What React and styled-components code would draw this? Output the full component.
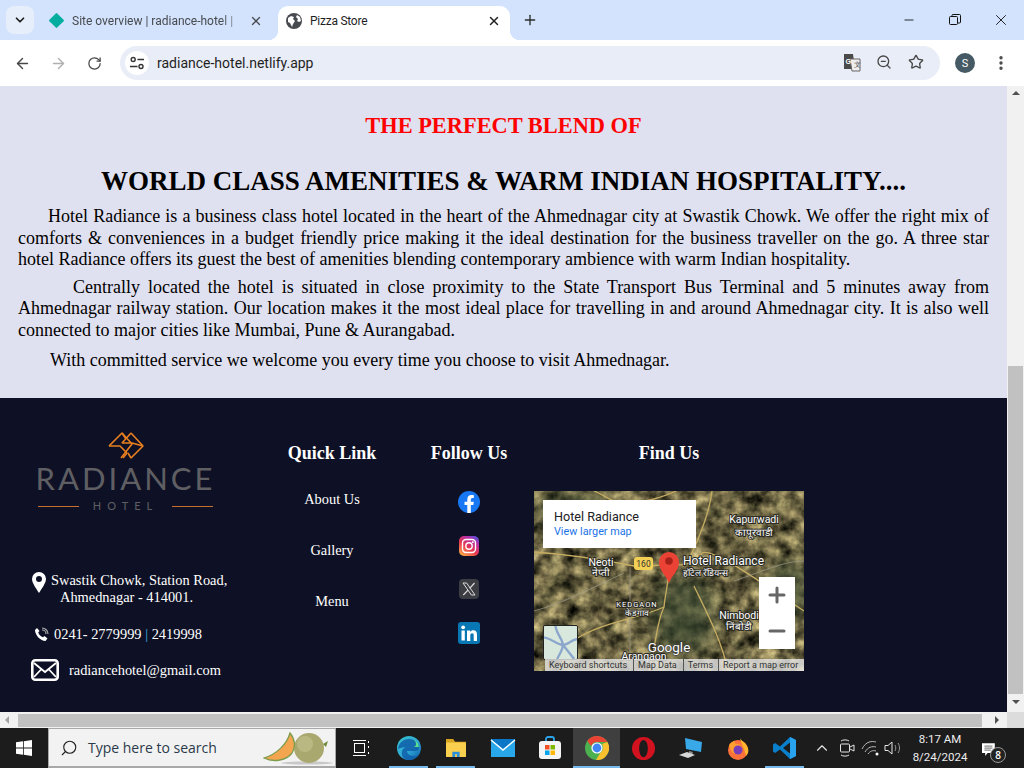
import React from 'react'
import styled, { createGlobalStyle } from 'styled-components'
import { ArrowLeft, ArrowRight, RotateCw, ChevronDown, X, Plus, Star, Search, ZoomOut, EllipsisVertical, Minus, ChevronUp } from 'lucide-react'

const Global = createGlobalStyle`
  html, body { margin: 0; padding: 0; height: 100%; overflow: hidden; background: #fff; }
  #root { height: 100%; }
  * { box-sizing: border-box; }
`

const Screen = styled.div`
  width: 1024px;
  height: 768px;
  display: flex;
  flex-direction: column;
  overflow: hidden;
  font-family: "Liberation Serif", serif;
`

/* browser chrome */
const TabStrip = styled.div`
  height: 40px;
  flex: none;
  background: #d3e3fd;
  display: flex;
  align-items: flex-end;
  padding-left: 6px;
  font-family: Roboto, "Liberation Sans", sans-serif;
  font-size: 12px;
  color: #44474a;
`
const TabList = styled.div`
  width: 28px;
  height: 28px;
  margin-bottom: 6px;
  border-radius: 8px;
  background: #e6eefb;
  color: #1f1f1f;
  display: flex;
  align-items: center;
  justify-content: center;
`
const Tab = styled.div`
  position: relative;
  height: 34px;
  display: flex;
  align-items: center;
  width: ${p => p.$w}px;
  margin-left: ${p => p.$ml || 0}px;
  padding: 0 ${p => p.$pr}px 5px ${p => p.$pl}px;
  border-radius: 10px 10px 0 0;
  background: ${p => (p.$active ? '#fff' : 'transparent')};
  color: ${p => (p.$active ? '#1f1f1f' : '#474a4e')};
  &::before, &::after {
    content: '';
    display: ${p => (p.$active ? 'block' : 'none')};
    position: absolute;
    bottom: 0;
    width: 10px;
    height: 10px;
  }
  &::before { left: -10px; background: radial-gradient(circle at 0 0, transparent 10px, #fff 10.5px); }
  &::after { right: -10px; background: radial-gradient(circle at 100% 0, transparent 10px, #fff 10.5px); }
`
const TabTitle = styled.span`
  flex: 1;
  margin-left: ${p => p.$gap}px;
  white-space: nowrap;
  ${p => (p.$fade
    ? 'mask-image: linear-gradient(90deg, #000 84%, transparent 100%);'
    : 'letter-spacing: -0.25px;')}
`
const Diamond = styled.span`
  width: 11px;
  height: 11px;
  margin: 0 1px;
  background: #00ad9f;
  border-radius: 1px;
  transform: rotate(45deg);
  flex: none;
`
const NewTab = styled.div`
  width: 16px;
  margin: 0 0 12px 12px;
  color: #2c2c2c;
  display: flex;
`
const WindowControls = styled.div`
  margin-left: auto;
  display: flex;
  align-self: flex-start;
  margin-top: 12px;
`
const WindowBtn = styled.div`
  width: 46px;
  height: 16px;
  display: flex;
  align-items: center;
  justify-content: center;
  color: #111;
`
const Toolbar = styled.div`
  height: 46px;
  flex: none;
  background: #fff;
  border-radius: 8px 8px 0 0;
  display: flex;
  align-items: center;
  padding: 0 0 0 4px;
  color: #474747;
`
const NavBtn = styled.div`
  width: 36px;
  display: flex;
  justify-content: center;
  color: ${p => (p.$off ? '#b0b0b0' : '#474747')};
`
const Omnibox = styled.div`
  width: 820px;
  height: 34px;
  margin-left: 8px;
  border-radius: 17px;
  background: #e9edf7;
  display: flex;
  align-items: center;
  padding: 0 8px 0 5px;
  font-family: Roboto, "Liberation Sans", sans-serif;
  font-size: 14px;
  color: #1f1f1f;
`
const SiteChip = styled.div`
  width: 24px;
  height: 24px;
  margin-right: 8px;
  border-radius: 50%;
  background: #fff;
  display: flex;
  align-items: center;
  justify-content: center;
`
const OmniIcons = styled.div`
  margin-left: auto;
  display: flex;
`
const OmniIcon = styled.div`
  width: 32px;
  display: flex;
  justify-content: center;
  color: #474747;
`
const Avatar = styled.div`
  width: 20px;
  height: 20px;
  margin-left: 15px;
  border-radius: 50%;
  background: #455a64;
  color: #fff;
  font-family: Roboto, sans-serif;
  font-size: 11px;
  display: flex;
  align-items: center;
  justify-content: center;
`
const MenuBtn = styled.div`
  margin-left: 16px;
  width: 20px;
  display: flex;
  justify-content: center;
  color: #474747;
`

/* page and scrollbars */
const Viewport = styled.div`
  height: 626px;
  flex: none;
  display: flex;
`
const Page = styled.div`
  width: 1007px;
  display: flex;
  flex-direction: column;
`
const VScroll = styled.div`
  width: 17px;
  background: #f1f1f1;
  display: flex;
  flex-direction: column;
  align-items: center;
`
const VThumb = styled.div`
  width: 15px;
  height: 328px;
  margin-top: 271px;
  background: #c1c1c1;
`
const ArrowUp = styled.div`
  margin-top: 5px;
  width: 0;
  height: 0;
  border: 4px solid transparent;
  border-top: 0;
  border-bottom: 4px solid #505050;
`
const ArrowDown = styled.div`
  margin-top: 6px;
  width: 0;
  height: 0;
  border: 4px solid transparent;
  border-bottom: 0;
  border-top: 4px solid #505050;
`
const HScroll = styled.div`
  height: 16px;
  flex: none;
  background: #f1f1f1;
  display: flex;
  align-items: center;
`
const HArrowLeft = styled.div`
  margin: 0 5px;
  width: 0;
  height: 0;
  border: 4px solid transparent;
  border-left: 0;
  border-right: 4px solid #a3a3a3;
`
const HArrowRight = styled.div`
  margin: 0 0 0 13px;
  width: 0;
  height: 0;
  border: 4px solid transparent;
  border-right: 0;
  border-left: 4px solid #505050;
`
const HThumb = styled.div`
  width: 964px;
  height: 13px;
  margin-left: 4px;
  background: #c1c1c1;
`
const ScrollCorner = styled.div`
  margin-left: auto;
  width: 17px;
  height: 16px;
  background: #dcdcdc;
`

/* page content */
const Intro = styled.section`
  height: 312px;
  flex: none;
  background: #e0e1f0;
  padding: 27px 18px 0;
  color: #000;
`
const Blend = styled.h2`
  margin: 0;
  text-align: center;
  font-size: 22.4px;
  line-height: 25px;
  color: #f00;
`
const Amenities = styled.h1`
  margin: 27px 0 0;
  text-align: center;
  font-size: 27px;
  line-height: 32px;
  color: #000;
`
const Para = styled.p`
  margin: ${p => p.$mt}px 0 0;
  font-size: 18px;
  line-height: 21.5px;
  text-align: justify;
  text-indent: ${p => p.$indent}px;
`
const Footer = styled.footer`
  flex: 1;
  background: #0e1125;
  color: #fff;
  display: grid;
  grid-template-columns: 260px 144px 130px 270px;
  padding-top: 34px;
`
const BrandCol = styled.div`
  display: flex;
  flex-direction: column;
  font-size: 14.4px;
`
const Logo = styled.div`
  width: 175px;
  margin-left: 38px;
  display: flex;
  flex-direction: column;
  align-items: center;
`
const LogoWord = styled.div`
  margin-top: 2px;
  font-family: Lato, sans-serif;
  font-weight: 400;
  font-size: 31px;
  line-height: 32px;
  letter-spacing: 3px;
  color: #5f5f63;
  white-space: nowrap;
`
const LogoSub = styled.div`
  width: 100%;
  margin-top: 6px;
  display: flex;
  align-items: center;
  justify-content: space-between;
  font-family: Lato, sans-serif;
  font-size: 11px;
  line-height: 12px;
  letter-spacing: 6px;
  color: #5f5f63;
  &::before, &::after {
    content: '';
    width: 41px;
    height: 1px;
    background: #c96f2e;
  }
`
const ContactRow = styled.div`
  display: flex;
  align-items: ${p => p.$align || 'center'};
  margin: ${p => p.$mt}px 0 0 ${p => p.$ml}px;
  gap: ${p => p.$gap}px;
  line-height: 17px;
  white-space: nowrap;
`
const AddressLine2 = styled.div`
  padding-left: 9px;
`
const Divider = styled.span`
  color: #3fb0e0;
`
const Col = styled.div`
  display: flex;
  flex-direction: column;
  align-items: center;
  padding-top: 11px;
`
const ColTitle = styled.h3`
  margin: 0;
  font-size: 18px;
  line-height: 21px;
  font-weight: bold;
`
const LinkList = styled.div`
  margin-top: 10px;
  display: flex;
  flex-direction: column;
  font-size: 14.4px;
`
const LinkItem = styled.div`
  height: 51px;
  display: flex;
  align-items: center;
  justify-content: center;
`
const SocialList = styled.div`
  margin-top: 27px;
  display: flex;
  flex-direction: column;
  gap: 21.5px;
`
const SocialIcon = styled.svg`
  display: block;
  width: 22px;
  height: 22px;
`
const MapBox = styled.div`
  position: relative;
  width: 270px;
  height: 180px;
  margin-top: 27px;
  overflow: hidden;
  font-family: Roboto, "Liberation Sans", sans-serif;
`
const MapArt = styled.svg`
  display: block;
  width: 270px;
  height: 180px;
`
const PlaceCard = styled.div`
  position: absolute;
  left: 9px;
  top: 9px;
  width: 153px;
  height: 48px;
  padding: 9px 11px;
  background: #fff;
  color: #202124;
  font-size: 12.6px;
  line-height: 15px;
`
const LargerMap = styled.div`
  font-size: 10.8px;
  line-height: 16px;
  color: #1a73e8;
`
const ZoomBox = styled.div`
  position: absolute;
  left: 225px;
  top: 86px;
  width: 36px;
  height: 72px;
  background: #fff;
  color: #666;
  display: flex;
  flex-direction: column;
  align-items: center;
  justify-content: space-around;
`
const Thumb = styled.svg`
  position: absolute;
  left: 9px;
  top: 134px;
  width: 35px;
  height: 35px;
  border: 1px solid #222;
  border-radius: 2px;
`
const Attribution = styled.div`
  position: absolute;
  left: 11px;
  right: 0;
  bottom: 0;
  height: 12px;
  background: rgba(232, 232, 232, 0.8);
  color: #333;
  font-size: 9px;
  line-height: 12px;
  display: flex;
  white-space: nowrap;
`
const AttrCell = styled.span`
  padding: 0 ${p => p.$pad}px 0 4px;
  border-right: ${p => (p.$last ? '0' : '1px solid #555')};
`

/* taskbar */
const Taskbar = styled.div`
  height: 40px;
  flex: none;
  background: #1c1c1c;
  display: flex;
  font-family: "Open Sans", "Noto Sans", sans-serif;
  color: #fff;
`
const StartBtn = styled.div`
  width: 48px;
  display: flex;
  align-items: center;
  justify-content: center;
`
const SearchBox = styled.div`
  width: 288px;
  margin-right: 2px;
  background: #f2f2f2;
  border: 1px solid #a8a8a8;
  border-bottom-width: 2px;
  display: flex;
  align-items: center;
  padding-left: 11px;
  font-size: 14px;
  color: #2b3a4a;
`
const SearchText = styled.span`
  margin-left: 10px;
`
const Melon = styled.svg`
  margin-left: auto;
  width: 72px;
  height: 36px;
`
const TaskBtn = styled.div`
  position: relative;
  width: 47px;
  display: flex;
  align-items: center;
  justify-content: center;
  background: ${p => (p.$active ? '#3f3f3f' : 'transparent')};
  &::after {
    content: '';
    display: ${p => (p.$open ? 'block' : 'none')};
    position: absolute;
    left: ${p => (p.$active ? 0 : 4)}px;
    right: ${p => (p.$active ? 0 : 4)}px;
    bottom: 0;
    height: 2px;
    background: #76b9ed;
  }
`
const Tray = styled.div`
  display: flex;
  align-items: center;
  margin-left: 3px;
`
const TrayIcon = styled.div`
  width: ${p => p.$w}px;
  display: flex;
  justify-content: center;
  color: #e6e6e6;
`
const Clock = styled.div`
  width: 72px;
  margin-left: 1px;
  font-family: Roboto, sans-serif;
  font-size: 11.5px;
  line-height: 18px;
  text-align: center;
  color: #eee;
`
const Notif = styled.div`
  position: relative;
  margin-left: 6px;
  width: 16px;
  height: 15px;
`
const NotifCount = styled.span`
  position: absolute;
  right: -8px;
  bottom: -7px;
  width: 16px;
  height: 16px;
  border-radius: 50%;
  border: 1px solid #999;
  background: #222;
  font-size: 10px;
  line-height: 14px;
  font-weight: 600;
  text-align: center;
`

const Globe = () => (
  <svg width="16" height="16" viewBox="0 0 16 16">
    <circle cx="8" cy="8" r="8" fill="#474a4e" />
    <path d="M2 5l3-2 3 1-1 2 2 2-2 3-1 3-2-4-2-1zM11 2l3 2 1 4-2 1-2-1 1-2-2-2z" fill="#fff" />
  </svg>
)

const SiteTune = () => (
  <svg width="16" height="16" viewBox="0 0 16 16" fill="none" stroke="#333" strokeWidth="1.4">
    <circle cx="4.2" cy="4.5" r="2" />
    <path d="M8.5 4.5H15M1 11.5h7.5" />
    <circle cx="12" cy="11.5" r="2" />
  </svg>
)

const Translate = () => (
  <svg width="18" height="18" viewBox="0 0 18 18">
    <path d="M1 0h9l2 15H1z" fill="#4a4a4a" />
    <path d="M7 5h10v12H9z" fill="#eee" stroke="#666" />
    <text x="2.5" y="10" fontSize="7" fontWeight="700" fill="#fff" fontFamily="Liberation Sans">G</text>
    <text x="10.5" y="13" fontSize="7" fill="#444" fontFamily="Liberation Sans">文</text>
  </svg>
)

const Restore = () => (
  <svg width="12" height="12" viewBox="0 0 12 12" fill="none" stroke="#111">
    <rect x="0.5" y="2.5" width="8" height="8" rx="1" />
    <path d="M3 2.5V1.5a1 1 0 0 1 1-1h6.5a1 1 0 0 1 1 1V8a1 1 0 0 1-1 1H9" />
  </svg>
)

const LogoMark = () => (
  <svg width="36" height="28" viewBox="0 0 36 28" fill="none" stroke="#e8801f" strokeWidth="1.6" strokeLinejoin="bevel">
    <path d="M1 14L14 1l4 6M23 1l12 13-12 12-3-5" />
    <path d="M14 1l10 11-11 14M23 1l-9 10h10l11 3" />
    <path d="M1 14h11l7 7-4 5" />
  </svg>
)

const PinIcon = () => (
  <svg width="14" height="21" viewBox="0 0 14 21">
    <path fillRule="evenodd" d="M7 0a7 7 0 0 1 7 7c0 4-4 9-7 14C4 16 0 11 0 7a7 7 0 0 1 7-7zm0 4a3 3 0 1 0 0 6 3 3 0 0 0 0-6z" fill="#fff" />
  </svg>
)

const PhoneIcon = () => (
  <svg width="15" height="15" viewBox="0 0 15 15" fill="none">
    <path d="M1 3l2-2 2.500 3-1.300 1.500c.6 2 2.800 4.200 4.800 4.800L10.500 9l3 2.500-2 2.500C6.500 14 1 8 1 3z" fill="#fff" />
    <path d="M8 3a4 4 0 0 1 4 4M8 1a6 6 0 0 1 6 6" stroke="#aaa" strokeWidth="1.200" />
  </svg>
)

const MailIcon = () => (
  <svg width="28" height="22" viewBox="0 0 28 22" fill="none" stroke="#fff" strokeWidth="2.600">
    <rect x="1.300" y="1.300" width="25.400" height="19.400" rx="3" />
    <path d="M3 4l11 9 11-9M3 18l7.500-8M25 18l-7.500-8" strokeWidth="1.800" />
  </svg>
)

const Facebook = () => (
  <SocialIcon viewBox="0 0 22 22">
    <circle cx="11" cy="11" r="11" fill="#1877f2" />
    <path d="M9.300 22v-8H6.500v-3.200h2.800V8.400c0-2.800 1.700-4.300 4.200-4.300 1.200 0 2.300.2 2.300.2v2.700h-1.300c-1.300 0-1.700.8-1.700 1.600v2.200h3l-.5 3.200h-2.500v8z" fill="#fff" />
  </SocialIcon>
)

const Instagram = () => (
  <SocialIcon viewBox="0 0 22 22">
    <defs>
      <linearGradient id="ig" x1="0.1" y1="1" x2="0.8" y2="0">
        <stop offset="0" stopColor="#fdb347" />
        <stop offset="0.45" stopColor="#e8374f" />
        <stop offset="0.8" stopColor="#b52fa8" />
        <stop offset="1" stopColor="#5b51d8" />
      </linearGradient>
    </defs>
    <rect x="1" y="1" width="20" height="20" rx="5" fill="url(#ig)" />
    <rect x="4.500" y="4.500" width="13" height="13" rx="3.500" fill="none" stroke="#fff" strokeWidth="1.400" />
    <circle cx="11" cy="11" r="3.200" fill="none" stroke="#fff" strokeWidth="1.400" />
    <circle cx="14.800" cy="7.200" r="0.900" fill="#fff" />
  </SocialIcon>
)

const XLogo = () => (
  <SocialIcon viewBox="0 0 22 22">
    <rect x="1" y="1" width="20" height="20" rx="4" fill="#3b3d42" />
    <path d="M5 5h3.600l8.400 12h-3.600z" fill="none" stroke="#ddd" strokeWidth="1" />
    <path d="M16.500 5l-4.800 5.400M10 12.200L5.300 17" stroke="#ddd" strokeWidth="1.200" />
  </SocialIcon>
)

const Linkedin = () => (
  <SocialIcon viewBox="0 0 22 22">
    <rect x="0" y="0" width="22" height="22" rx="3" fill="#0a77b5" />
    <rect x="3.500" y="8.500" width="3.300" height="10" fill="#fff" />
    <circle cx="5.150" cy="5.300" r="1.900" fill="#fff" />
    <path d="M9 8.500h3.100v1.400c.6-1 1.700-1.700 3.200-1.700 2.700 0 3.700 1.700 3.700 4.500v6.300h-3.300v-5.600c0-1.300-.4-2.200-1.600-2.200-1.300 0-1.800 1-1.800 2.200v5.600H9z" fill="#fff" />
  </SocialIcon>
)

const MapLabel = ({ x, y, size = 10.500, anchor = 'middle', spacing, children }) => (
  <text
    x={x}
    y={y}
    fontSize={size}
    textAnchor={anchor}
    letterSpacing={spacing}
    fill="#fff"
    stroke="#2b2b24"
    strokeWidth="2"
    paintOrder="stroke"
    fontFamily="Roboto, sans-serif"
  >
    {children}
  </text>
)

const MapPicture = () => (
  <MapArt viewBox="0 0 270 180">
    <defs>
      <filter id="sat" x="0" y="0" width="100%" height="100%" colorInterpolationFilters="sRGB">
        <feTurbulence type="fractalNoise" baseFrequency="0.07" numOctaves="4" seed="11" />
        <feColorMatrix values="1.100 0.300 0 0 -0.280  1.000 0.300 0 0 -0.260  0.700 0.200 0 0 -0.190  0 0 0 0 1" />
      </filter>
      <filter id="soft"><feGaussianBlur stdDeviation="9" /></filter>
    </defs>
    <rect width="270" height="180" fill="#6b6650" filter="url(#sat)" />
    <g fill="#35452f" opacity="0.65" filter="url(#soft)">
      <ellipse cx="150" cy="125" rx="32" ry="40" />
      <ellipse cx="40" cy="20" rx="40" ry="16" />
      <ellipse cx="255" cy="100" rx="22" ry="30" />
    </g>
    <g fill="none" stroke="#c6ad62" strokeWidth="1.300">
      <path d="M0 61c30 2 70 8 100 14 20 2 25-3 40-1 5 0 22 1 28-12 10-6 60 30 102 58" />
      <path d="M135 76c0 14-4 28-5 40-8 16-8 40-15 64" />
      <path d="M130 116C100 130 60 130 25 160" />
      <path d="M160 95c12 25 28 55 34 85" />
      <path d="M178 0c-2 20-14 50-22 66" />
      <path d="M60 0c10 4 20 12 30 14 18-2 40-8 52-14" />
    </g>
    <g fill="none" stroke="#9b9a8a" strokeWidth="0.700">
      <path d="M0 120c30-8 60-24 90-38" />
      <path d="M96 76v104" />
      <path d="M200 90c30-10 50-20 70-20" />
    </g>
    <rect x="100" y="66" width="19" height="13" rx="3" fill="#f2cf55" />
    <text x="109.500" y="76" fontSize="8.500" textAnchor="middle" fill="#333" fontFamily="Roboto, sans-serif">160</text>
    <MapLabel x={220} y={32}>Kapurwadi</MapLabel>
    <MapLabel x={220} y={45} size={10}>कापूरवाडी</MapLabel>
    <MapLabel x={67} y={75}>Neoti</MapLabel>
    <MapLabel x={67} y={85} size={10}>नेप्ती</MapLabel>
    <MapLabel x={149} y={74} size={12} anchor="start">Hotel Radiance</MapLabel>
    <MapLabel x={149} y={85} size={9} anchor="start">हॉटेल रॅडियन्स</MapLabel>
    <MapLabel x={103} y={116} size={7.500} spacing="1">KEDGAON</MapLabel>
    <MapLabel x={103} y={125} size={8.500}>केडगाव</MapLabel>
    <MapLabel x={205} y={128} size={10.500}>Nimbodi</MapLabel>
    <MapLabel x={205} y={139} size={10}>निंबोडी</MapLabel>
    <MapLabel x={110} y={169} size={10.500}>Arangaon</MapLabel>
    <text x={135} y={161} fontSize="13.500" textAnchor="middle" fill="#fff" stroke="#333" strokeWidth="1.200" paintOrder="stroke" fontFamily="Roboto, sans-serif">Google</text>
    <path d="M135 92c-3-8-10-12-10-21a10 10 0 0 1 20 0c0 9-7 13-10 21z" fill="#ea4335" />
    <circle cx="135" cy="70" r="3.800" fill="#a5221a" />
  </MapArt>
)

const Edge = () => (
  <svg width="24" height="24" viewBox="0 0 24 24">
    <defs>
      <linearGradient id="edge" x1="0" y1="0" x2="1" y2="1">
        <stop offset="0" stopColor="#35c1c8" />
        <stop offset="0.55" stopColor="#2fa8d8" />
        <stop offset="1" stopColor="#0c59a4" />
      </linearGradient>
    </defs>
    <circle cx="12" cy="12" r="12" fill="url(#edge)" />
    <path d="M1 13C2 6 7 3 12 3c5 0 9 3 10 8 .4 3-2 4-4 4H10c0 3 3 5 7 5 1.500 0 3-.4 4-1-2 3-5 5-9 5-6 0-8-5-7-9 1-3 4-4 4-4-3 0-6 1-8 2z" fill="#0f5ea8" opacity="0.85" />
    <path d="M22 12c0-5-4-10-10-10 5 0 7 3 7 6 0 2-1 3-3 3h6z" fill="#58e08a" />
  </svg>
)

const Explorer = () => (
  <svg width="22" height="20" viewBox="0 0 24 22">
    <path d="M1 1h8l2 3h12v3H1z" fill="#d9a520" />
    <rect x="1" y="5" width="22" height="16" rx="1" fill="#fbd04f" />
    <path d="M8 21v-6h8v6h-3v-3h-2v3z" fill="#2d8fd8" />
  </svg>
)

const Mail = () => (
  <svg width="26" height="20" viewBox="0 0 26 20">
    <rect x="1" y="1" width="24" height="18" fill="#28a8ea" />
    <path d="M1 1l12 10L25 1z" fill="#0b75c6" />
    <path d="M1 2l12 10L25 2" fill="none" stroke="#fff" strokeWidth="1.400" />
  </svg>
)

const Store = () => (
  <svg width="24" height="24" viewBox="0 0 24 24">
    <path d="M8 6V3a2 2 0 0 1 2-2h4a2 2 0 0 1 2 2v3" fill="none" stroke="#2aa3e8" strokeWidth="1.800" />
    <rect x="1" y="5" width="22" height="18" rx="3" fill="#f4f4f4" />
    <rect x="7" y="9" width="4.500" height="4.500" fill="#f25022" />
    <rect x="12.500" y="9" width="4.500" height="4.500" fill="#7fba00" />
    <rect x="7" y="14.500" width="4.500" height="4.500" fill="#00a4ef" />
    <rect x="12.500" y="14.500" width="4.500" height="4.500" fill="#ffb900" />
  </svg>
)

const Chrome = () => (
  <svg width="24" height="24" viewBox="0 0 24 24">
    <circle cx="12" cy="12" r="12" fill="#4caf50" />
    <path d="M12 0a12 12 0 0 1 10.400 6H12a6 6 0 0 0-5.700 4.200L2.300 5A12 12 0 0 1 12 0z" fill="#ea4335" />
    <path d="M22.400 6A12 12 0 0 1 11 24l4.500-7.500a6 6 0 0 0 1.500-8.500z" fill="#fbc02d" />
    <circle cx="12" cy="12" r="5.600" fill="#fff" />
    <circle cx="12" cy="12" r="4.400" fill="#4285f4" />
  </svg>
)

const Opera = () => (
  <svg width="23" height="23" viewBox="0 0 24 24">
    <path fillRule="evenodd" d="M12 0a12 12 0 1 1 0 24 12 12 0 0 1 0-24zm0 3c-2.700 0-4.500 4-4.500 9s1.800 9 4.500 9 4.500-4 4.500-9-1.800-9-4.500-9z" fill="#d3121f" />
  </svg>
)

const Laptop = () => (
  <svg width="24" height="22" viewBox="0 0 24 22">
    <path d="M6 1l17 4-1 10-15-3z" fill="#38a8e8" />
    <path d="M10 14l4 1-1 3-3-1z" fill="#8a8a8a" />
    <path d="M0 18l8-3 8 3-7 3z" fill="#d8d8d8" />
  </svg>
)

const Firefox = () => (
  <svg width="24" height="24" viewBox="0 0 24 24">
    <circle cx="12" cy="14" r="10" fill="#ff7139" />
    <path d="M14 2c1 3 6 4 8 10 1 3 0 6-2 8-1-6-5-12-6-18z" fill="#ffb52e" />
    <path d="M3 9c2-3 4-4 6-4-1 2 0 3 2 3 4 0 6 3 5 7-1 3-4 4-7 3-3-1-5-5-6-9z" fill="#ff9f2f" />
    <circle cx="12" cy="14" r="4.500" fill="#7a3db8" />
  </svg>
)

const VSCode = () => (
  <svg width="24" height="24" viewBox="0 0 24 24">
    <path d="M17 1l6 3v16l-6 3-10-9.500L2 17l-2-1.500v-7L2 7l5 3.500z" fill="#0a7fcb" />
    <path d="M17 6.500L10 12l7 5.500z" fill="#1c1c1c" />
    <path d="M17 1l6 3v16l-6 3z" fill="#2aa3ee" />
  </svg>
)

const TaskView = () => (
  <svg width="17" height="16" viewBox="0 0 17 16" fill="none" stroke="#fff">
    <rect x="1.500" y="3.500" width="10" height="9" />
    <path d="M0 0.500h13M0 15.500h13M15.500 1v2M15.500 6v2M15.500 12v2" />
  </svg>
)

const WinLogo = () => (
  <svg width="16" height="16" viewBox="0 0 16 16" fill="#fff">
    <path d="M0 2.300L7 1.300v6.300H0zM7.800 1.200L16 0v7.600H7.800zM0 8.400h7v6.300L0 13.700zM7.800 8.400H16V16l-8.200-1.200z" />
  </svg>
)

const MelonArt = () => (
  <Melon viewBox="0 0 72 36">
    <ellipse cx="44" cy="33" rx="26" ry="1.500" fill="#c8c8c8" />
    <circle cx="46" cy="18" r="15" fill="#a9a96f" />
    <circle cx="42" cy="14" r="8" fill="#c1bf8b" opacity="0.7" />
    <path d="M60 14l5-3-2 6z" fill="#6f8a3c" />
    <path d="M1 28C14 24 24 14 27 3c5 6 6 14 2 20-5 7-18 10-28 5z" fill="#f3a54f" stroke="#7d9d4e" strokeWidth="1.300" />
  </Melon>
)

const Wifi = () => (
  <svg width="20" height="16" viewBox="0 0 20 16" fill="none" stroke="#bbb">
    <path d="M1 9c4-8 10-8 14-7M4 12c3-5 7-6 11-5M7 14c2-3 5-4 8-3" />
    <circle cx="16" cy="14" r="1.500" fill="#fff" stroke="none" />
  </svg>
)

const Speaker = () => (
  <svg width="18" height="16" viewBox="0 0 18 16" fill="none" stroke="#e6e6e6">
    <path d="M1 5.500h3L8 2v12l-4-3.500H1z" />
    <path d="M11 5c1 2 1 4 0 6M14 3c2 3 2 7 0 10" stroke="#999" />
  </svg>
)

const Meet = () => (
  <svg width="18" height="18" viewBox="0 0 18 18" fill="none" stroke="#e6e6e6">
    <rect x="3.500" y="5" width="9" height="8" rx="1" />
    <path d="M13 8l4-2v6l-4-2M4 2c2-1.500 6-1.500 8 0M4 16c2 1.500 6 1.500 8 0" />
  </svg>
)

export default function App() {
  return (
    <Screen>
      <Global />
      <TabStrip>
        <TabList><ChevronDown size={14} strokeWidth={3} /></TabList>
        <Tab $w={240} $ml={4} $pl={12} $pr={15}>
          <Diamond />
          <TabTitle $gap={9} $fade>Site overview | radiance-hotel |</TabTitle>
          <X size={14} strokeWidth={2.200} />
        </Tab>
        <Tab $active $w={232} $pl={8} $pr={9}>
          <Globe />
          <TabTitle $gap={8}>Pizza Store</TabTitle>
          <X size={14} strokeWidth={2.500} color="#222" />
        </Tab>
        <NewTab><Plus size={16} strokeWidth={2} /></NewTab>
        <WindowControls>
          <WindowBtn><Minus size={14} strokeWidth={1.500} /></WindowBtn>
          <WindowBtn><Restore /></WindowBtn>
          <WindowBtn><X size={18} strokeWidth={1.200} /></WindowBtn>
        </WindowControls>
      </TabStrip>

      <Toolbar>
        <NavBtn><ArrowLeft size={17} strokeWidth={2} /></NavBtn>
        <NavBtn $off><ArrowRight size={17} strokeWidth={2} /></NavBtn>
        <NavBtn><RotateCw size={15} strokeWidth={2} /></NavBtn>
        <Omnibox>
          <SiteChip><SiteTune /></SiteChip>
          radiance-hotel.netlify.app
          <OmniIcons>
            <OmniIcon><Translate /></OmniIcon>
            <OmniIcon><ZoomOut size={16} strokeWidth={2} /></OmniIcon>
            <OmniIcon><Star size={16} strokeWidth={2} /></OmniIcon>
          </OmniIcons>
        </Omnibox>
        <Avatar>S</Avatar>
        <MenuBtn><EllipsisVertical size={18} strokeWidth={2.500} /></MenuBtn>
      </Toolbar>

      <Viewport>
        <Page>
          <Intro>
            <Blend>THE PERFECT BLEND OF</Blend>
            <Amenities>WORLD CLASS AMENITIES &amp; WARM INDIAN HOSPITALITY....</Amenities>
            <Para $mt={9} $indent={30}>
              Hotel Radiance is a business class hotel located in the heart of the Ahmednagar city at Swastik Chowk. We offer the right mix of comforts &amp; conveniences in a budget friendly price making it the ideal destination for the business traveller on the go. A three star hotel Radiance offers its guest the best of amenities blending contemporary ambience with warm Indian hospitality.
            </Para>
            <Para $mt={6} $indent={55}>
              Centrally located the hotel is situated in close proximity to the State Transport Bus Terminal and 5 minutes away from Ahmednagar railway station. Our location makes it the most ideal place for travelling in and around Ahmednagar city. It is also well connected to major cities like Mumbai, Pune &amp; Aurangabad.
            </Para>
            <Para $mt={9} $indent={32}>
              With committed service we welcome you every time you choose to visit Ahmednagar.
            </Para>
          </Intro>
          <Footer>
            <BrandCol>
              <Logo>
                <LogoMark />
                <LogoWord>RADIANCE</LogoWord>
                <LogoSub>HOTEL</LogoSub>
              </Logo>
              <ContactRow $mt={60} $ml={32} $gap={5} $align="flex-start">
                <PinIcon />
                <div>
                  Swastik Chowk, Station Road,
                  <AddressLine2>Ahmednagar - 414001.</AddressLine2>
                </div>
              </ContactRow>
              <ContactRow $mt={20} $ml={34} $gap={5}>
                <PhoneIcon />
                <span>0241- 2779999 <Divider>|</Divider> 2419998</span>
              </ContactRow>
              <ContactRow $mt={16} $ml={31} $gap={10}>
                <MailIcon />
                radiancehotel@gmail.com
              </ContactRow>
            </BrandCol>
            <Col>
              <ColTitle>Quick Link</ColTitle>
              <LinkList>
                <LinkItem>About Us</LinkItem>
                <LinkItem>Gallery</LinkItem>
                <LinkItem>Menu</LinkItem>
              </LinkList>
            </Col>
            <Col>
              <ColTitle>Follow Us</ColTitle>
              <SocialList>
                <Facebook />
                <Instagram />
                <XLogo />
                <Linkedin />
              </SocialList>
            </Col>
            <Col>
              <ColTitle>Find Us</ColTitle>
              <MapBox>
                <MapPicture />
                <PlaceCard>
                  Hotel Radiance
                  <LargerMap>View larger map</LargerMap>
                </PlaceCard>
                <ZoomBox>
                  <Plus size={24} strokeWidth={3} />
                  <Minus size={24} strokeWidth={3} />
                </ZoomBox>
                <Thumb viewBox="0 0 35 35">
                  <rect width="35" height="35" fill="#d8e8dc" />
                  <path d="M0 12c10 2 14 8 20 8s10-6 15-6M12 0c2 10 8 14 8 20s-4 10-6 15M20 20l12 15" fill="none" stroke="#8ca6cc" strokeWidth="2.500" />
                </Thumb>
                <Attribution>
                  <AttrCell $pad={6}>Keyboard shortcuts</AttrCell>
                  <AttrCell $pad={6}>Map Data</AttrCell>
                  <AttrCell $pad={5}>Terms</AttrCell>
                  <AttrCell $pad={0} $last>Report a map error</AttrCell>
                </Attribution>
              </MapBox>
            </Col>
          </Footer>
        </Page>
        <VScroll>
          <ArrowUp />
          <VThumb />
          <ArrowDown />
        </VScroll>
      </Viewport>
      <HScroll>
        <HArrowLeft />
        <HThumb />
        <HArrowRight />
        <ScrollCorner />
      </HScroll>

      <Taskbar>
        <StartBtn><WinLogo /></StartBtn>
        <SearchBox>
          <Search size={18} strokeWidth={1.500} color="#222" style={{ transform: 'scaleX(-1)' }} />
          <SearchText>Type here to search</SearchText>
          <MelonArt />
        </SearchBox>
        <TaskBtn><TaskView /></TaskBtn>
        <TaskBtn $open><Edge /></TaskBtn>
        <TaskBtn $open><Explorer /></TaskBtn>
        <TaskBtn><Mail /></TaskBtn>
        <TaskBtn><Store /></TaskBtn>
        <TaskBtn $open $active><Chrome /></TaskBtn>
        <TaskBtn><Opera /></TaskBtn>
        <TaskBtn><Laptop /></TaskBtn>
        <TaskBtn><Firefox /></TaskBtn>
        <TaskBtn $open><VSCode /></TaskBtn>
        <Tray>
          <TrayIcon $w={22}><ChevronUp size={18} strokeWidth={1.500} /></TrayIcon>
          <TrayIcon $w={26}><Meet /></TrayIcon>
          <TrayIcon $w={24}><Wifi /></TrayIcon>
          <TrayIcon $w={20}><Speaker /></TrayIcon>
          <Clock>8:17 AM<br />8/24/2024</Clock>
          <Notif>
            <svg width="16" height="15" viewBox="0 0 20 18"><path d="M0 0h16v12H7l-3 4v-4H0z" fill="#fff" /><path d="M3 3.500h10M3 6h10M3 8.500h8" stroke="#444" /></svg>
            <NotifCount>8</NotifCount>
          </Notif>
        </Tray>
      </Taskbar>
    </Screen>
  )
}
